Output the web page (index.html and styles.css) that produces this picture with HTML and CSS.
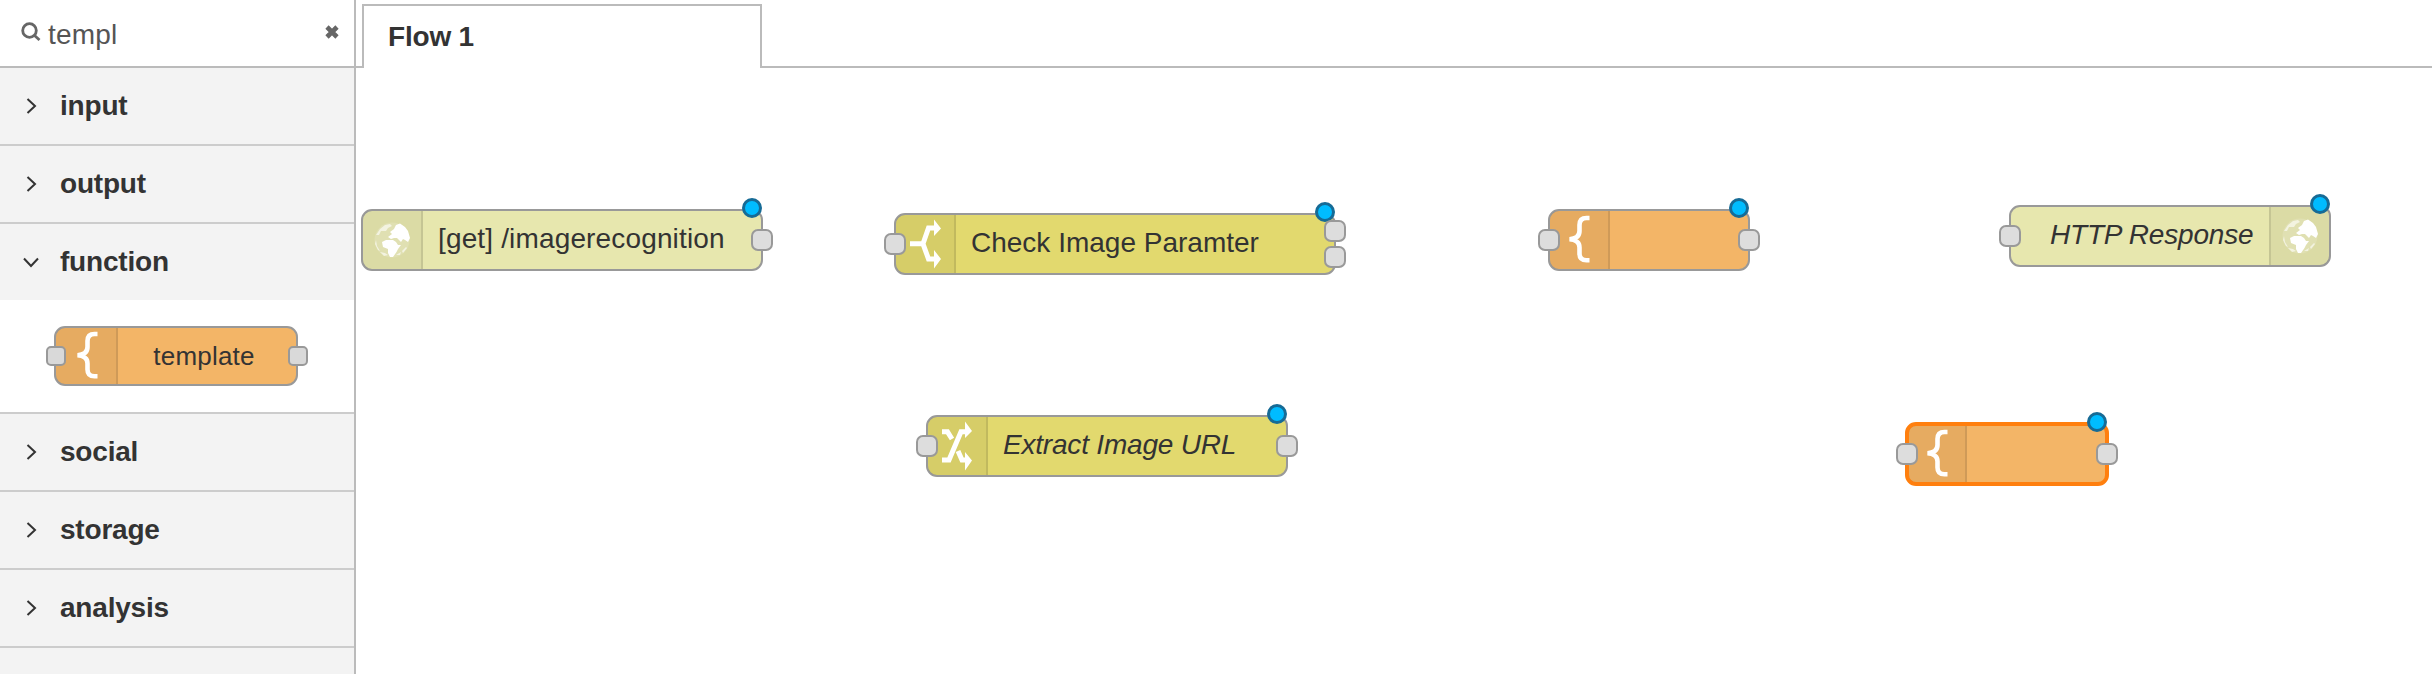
FILE: index.html
```html
<!DOCTYPE html>
<html lang="en">
<head>
<meta charset="utf-8">
<title>Flow editor</title>
<link rel="stylesheet" href="styles.css">
</head>
<body>
<svg class="defs" aria-hidden="true">
  <symbol id="brace" viewBox="0 0 40 60"><path d="M30.500 8H27.500Q20.500 8 20.500 15V21Q20.500 28.500 10.500 29.200Q20.500 30 20.500 37.500V43.500Q20.500 50.300 27.500 50.300H30.500" fill="none" stroke="#fff" stroke-width="4.600"/></symbol>
  <symbol id="globe" viewBox="0 0 36 36">
    <circle cx="18" cy="18" r="17.500" fill="#fff" opacity=".15"/>
    <path d="M16 10L20 7L22 3L26 1.500L31 5L34 9L36 16L34 20L31 18L29 17L27 20L25 18L23 16L20 16L17 17L14 15L18 12Z" fill="#fff"/>
    <path d="M8 20L12 18L19 18L22 20L24 23L27 23L24 27L22.500 30L19 35L16 35L14 31L14 27L9 25Z" fill="#fff"/>
    <path d="M2 13L6 7L11 3L16 2L18 4L14 6L12 9L7 9L5 13ZM2 18L3 24L6 29L4 28L1 22ZM28 29L32 25L33 26L29 31ZM6 30L11 31L14 33L10 34ZM22 33L27 30L26 33Z" fill="#fff" opacity=".6"/>
  </symbol>
  <symbol id="switch" viewBox="0 0 40 60"><path d="M0 29.800H13L18.500 14H25M13 29.800L18.500 45H25" fill="none" stroke="#fff" stroke-width="5"/><path d="M24 5.500L31 14.500L24 22ZM24 36L31 45L24 54.500Z" fill="#fff"/></symbol>
  <symbol id="change" viewBox="0 0 40 60"><path d="M1 15.800H6.500L11 23M1 44H8L20 15.800H26M17 35L21 44H26" fill="none" stroke="#fff" stroke-width="5"/><path d="M24 5.500L31 15L24 22ZM24 36L31 44.500L24 54.500Z" fill="#fff"/></symbol>
</svg>
<div class="editor">
  <aside class="palette">
    <div class="search">
      <svg class="search-icon" viewBox="0 0 20 20"><circle cx="8.500" cy="8.500" r="6.800"/><path d="M13 13L18.500 18"/></svg>
      <span class="search-text">templ</span>
      <svg class="clear" viewBox="0 0 14 14"><path d="M2 2L12 12M12 2L2 12"/></svg>
    </div>
    <div class="category"><svg class="chevron" viewBox="0 0 16 16"><path d="M4.500 1L12 8L4.500 15"/></svg>input</div>
    <div class="category"><svg class="chevron" viewBox="0 0 16 16"><path d="M4.500 1L12 8L4.500 15"/></svg>output</div>
    <div class="category open"><svg class="chevron" viewBox="0 0 16 16"><path d="M1 4.500L8 12L15 4.500"/></svg>function</div>
    <div class="category-body">
      <div class="node template small">
        <div class="icon"><svg class="glyph"><use href="#brace"/></svg></div>
        <span class="label">template</span>
        <i class="port in"></i><i class="port out"></i>
      </div>
    </div>
    <div class="category"><svg class="chevron" viewBox="0 0 16 16"><path d="M4.500 1L12 8L4.500 15"/></svg>social</div>
    <div class="category"><svg class="chevron" viewBox="0 0 16 16"><path d="M4.500 1L12 8L4.500 15"/></svg>storage</div>
    <div class="category"><svg class="chevron" viewBox="0 0 16 16"><path d="M4.500 1L12 8L4.500 15"/></svg>analysis</div>
    <div class="category"></div>
  </aside>
  <main class="workspace">
    <div class="tabs"><div class="tab">Flow 1</div></div>
    <div class="canvas">
      <div class="node http n-get">
        <div class="icon"><svg class="globe"><use href="#globe"/></svg></div>
        <span class="label">[get] /imagerecognition</span>
        <i class="port out"></i><i class="changed"></i>
      </div>
      <div class="node logic n-check">
        <div class="icon"><svg class="glyph"><use href="#switch"/></svg></div>
        <span class="label">Check Image Paramter</span>
        <i class="changed"></i><i class="port in"></i><i class="port out first"></i><i class="port out second"></i>
      </div>
      <div class="node template n-tpl">
        <div class="icon"><svg class="glyph"><use href="#brace"/></svg></div>
        <i class="port in"></i><i class="port out"></i><i class="changed"></i>
      </div>
      <div class="node http n-response">
        <span class="label italic">HTTP Response</span>
        <div class="icon right"><svg class="globe"><use href="#globe"/></svg></div>
        <i class="port in"></i><i class="changed"></i>
      </div>
      <div class="node logic n-extract">
        <div class="icon"><svg class="glyph"><use href="#change"/></svg></div>
        <span class="label italic">Extract Image URL</span>
        <i class="port in"></i><i class="port out"></i><i class="changed"></i>
      </div>
      <div class="node template selected n-sel">
        <div class="icon"><svg class="glyph"><use href="#brace"/></svg></div>
        <i class="port in"></i><i class="port out"></i><i class="changed"></i>
      </div>
    </div>
  </main>
</div>
</body>
</html>
```
FILE: styles.css
```css
* { box-sizing: border-box; }
body { margin: 0; background: #fff; color: #333; font-family: "Liberation Sans", Arial, sans-serif; }
.defs { position: absolute; width: 0; height: 0; }
.editor { display: flex; width: 2432px; height: 674px; overflow: hidden; }

.palette { width: 356px; flex: none; border-right: 2px solid #bbb; overflow: hidden; }
.search { display: flex; align-items: flex-start; height: 68px; padding-left: 21px; border-bottom: 2px solid #bbb; color: #555; }
.search-icon { width: 20px; height: 20px; margin-top: 22px; fill: none; stroke: #666; stroke-width: 2.8; }
.search-text { margin: 18px 0 0 7px; width: 270px; font-size: 28px; line-height: 34px; letter-spacing: 0.2px; }
.clear { width: 14px; height: 14px; margin: 25px 0 0 7px; stroke: #666; stroke-width: 4.6; }
.category { display: flex; align-items: center; height: 78px; padding-left: 23px; background: #f3f3f3; border-bottom: 2px solid #ccc; font-size: 28px; font-weight: bold; letter-spacing: -0.2px; }
.category.open { height: 76px; border-bottom: 0; }
.chevron { width: 16px; height: 16px; margin-right: 21px; fill: none; stroke: #333; stroke-width: 2; }
.category-body { height: 114px; padding: 26px 0 0 54px; border-bottom: 2px solid #ccc; }

.workspace { flex: 1; display: flex; flex-direction: column; }
.tabs { display: flex; height: 68px; padding: 4px 0 0 6px; background: linear-gradient(#bbb, #bbb) bottom / 100% 2px no-repeat; }
.tab { width: 400px; height: 64px; padding-left: 24px; border: 2px solid #bbb; border-bottom: 0; background: #fff; font-size: 28px; line-height: 61px; font-weight: bold; letter-spacing: -0.2px; }
.canvas { position: relative; flex: 1; }

.node { position: absolute; display: flex; height: 62px; border: 2px solid #999; border-radius: 11px; }
.node.small { position: relative; width: 244px; height: 60px; }
.node.http { background: #e7e7ae; }
.node.logic { background: #e2d96e; }
.node.template { background: #f3b567; }
.node.selected { height: 64px; border: 4px solid #ff7f0e; }
.icon { width: 60px; flex: none; background: rgba(0, 0, 0, .05); border-right: 2px solid rgba(0, 0, 0, .1); border-radius: 8px 0 0 8px; }
.small .icon { width: 62px; }
.selected .icon { width: 58px; border-radius: 6px 0 0 6px; }
.icon.right { border-right: 0; border-left: 2px solid rgba(0, 0, 0, .1); border-radius: 0 8px 8px 0; }
.glyph { display: block; width: 40px; height: 60px; margin: -1px 0 0 9px; }
.small .glyph { margin: -2px 0 0 11px; }
.selected .glyph { margin: -2px 0 0 8px; }
.n-check .glyph { margin-left: 14px; }
.n-extract .glyph { margin-left: 13px; }
.globe { display: block; width: 36px; height: 36px; margin: 11px 0 0 11px; }
.label { font-size: 28px; line-height: 56px; white-space: nowrap; }
.small .label { width: 172px; text-align: center; font-size: 26px; line-height: 56px; letter-spacing: 0.2px; }
.italic { font-style: italic; letter-spacing: -0.2px; }

.port { position: absolute; width: 22px; height: 22px; top: 18px; background: #ddd; border: 2px solid #999; border-radius: 7px; }
.port.in { left: -12px; }
.port.out { right: -12px; }
.port.first { top: 5px; }
.port.second { top: 31px; }
.small .port { width: 20px; height: 20px; border-radius: 5px; background: #d9d9d9; }
.selected .port { top: 17px; }
.selected .port.in, .selected .port.out { margin: 0 -1px; }
.small .port.in { left: -10px; }
.changed { position: absolute; top: -13px; right: -1px; width: 20px; height: 20px; border: 3px solid #166b96; border-radius: 50%; background: #00bcff; }
.selected .changed { top: -14px; right: -2px; }

.n-get { left: 5px; top: 141px; width: 402px; }
.n-get .label { margin-left: 15px; letter-spacing: 0.15px; }
.n-check { left: 538px; top: 145px; width: 442px; }
.n-check .label { margin-left: 15px; }
.n-tpl { left: 1192px; top: 141px; width: 202px; }
.n-response { left: 1653px; top: 137px; width: 322px; }
.n-response .label { width: 258px; padding-left: 39px; }
.n-extract { left: 570px; top: 347px; width: 362px; }
.n-extract .label { margin-left: 15px; }
.n-sel { left: 1549px; top: 354px; width: 204px; }
```
